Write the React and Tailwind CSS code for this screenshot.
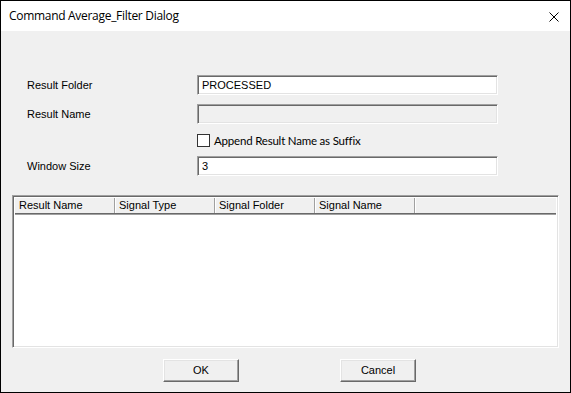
const sunken =
  "border border-t-[#a0a0a0] border-l-[#a0a0a0] border-b-white border-r-white shadow-[inset_1px_1px_0_#696969,inset_-1px_-1px_0_#e3e3e3]";
const raised =
  "border border-t-white border-l-white border-b-[#696969] border-r-[#696969] shadow-[inset_-1px_-1px_0_#a0a0a0,inset_1px_1px_0_#e3e3e3]";

function Field({ label, value, disabled }) {
  return (
    <div className="flex items-center h-5">
      <span className="w-[170px] text-[11px] text-black">{label}</span>
      <div
        className={`w-[301px] h-5 pl-[4px] flex items-center text-[11px] text-black ${sunken} ${
          disabled ? "bg-[#f0f0f0]" : "bg-white"
        }`}
      >
        {value}
      </div>
    </div>
  );
}

const cols = ["Result Name", "Signal Type", "Signal Folder", "Signal Name"];

export default function App() {
  return (
    <div
      className="w-[571px] h-[393px] border border-black bg-[#f0f0f0] flex flex-col overflow-hidden"
      style={{ fontFamily: '"Liberation Sans", Arial, sans-serif' }}
    >
      <div className="h-[30px] bg-white flex items-center justify-between pl-[8px] pr-[11px] shrink-0">
        <span
          className="text-[12px] text-black tracking-[-0.3px]"
          style={{ fontFamily: '"Open Sans", "Noto Sans", sans-serif' }}
        >
          Command Average_Filter Dialog
        </span>
        <svg width="10" height="10" viewBox="0 0 10 10" className="mt-[1px]">
          <path d="M0.5 0.5L9.5 9.5M9.5 0.5L0.5 9.5" stroke="#000" strokeWidth="1" />
        </svg>
      </div>

      <div className="flex flex-col pt-[44px] pl-[26px]">
        <Field label="Result Folder" value="PROCESSED" />
        <div className="h-[9px]" />
        <Field label="Result Name" value="" disabled />
        <div className="h-[10px]" />
        <div className="flex items-center h-[13px] pl-[170px]">
          <div className="w-[13px] h-[13px] border border-[#333] bg-white" />
          <span
            className="ml-[4px] text-[11.5px] text-black tracking-[-0.2px]"
            style={{ fontFamily: 'Lato, "Open Sans", sans-serif' }}
          >
            Append Result Name as Suffix
          </span>
        </div>
        <div className="h-[9px]" />
        <Field label="Window Size" value="3" />
      </div>

      <div className={`mt-[19px] ml-[11px] w-[547px] h-[153px] bg-white flex flex-col p-[1px] ${sunken}`}>
        <div className="flex h-[16px] bg-[#f0f0f0] border-b border-[#696969] shadow-[0_1px_0_#a0a0a0] mx-px mt-px">
          {cols.map((c) => (
            <div
              key={c}
              className="w-[100px] flex items-center pl-[4px] text-[11px] text-black border-r border-[#a0a0a0] shadow-[1px_0_0_#fff]"
            >
              {c}
            </div>
          ))}
          <div className="flex-1" />
        </div>
      </div>

      <div className="flex mt-[11px] ml-[162px] gap-[101px]">
        <button className={`w-[76px] h-[23px] bg-[#f0f0f0] text-[11px] text-black ${raised}`}>OK</button>
        <button className={`w-[76px] h-[23px] bg-[#f0f0f0] text-[11px] text-black ${raised}`}>Cancel</button>
      </div>
    </div>
  );
}
